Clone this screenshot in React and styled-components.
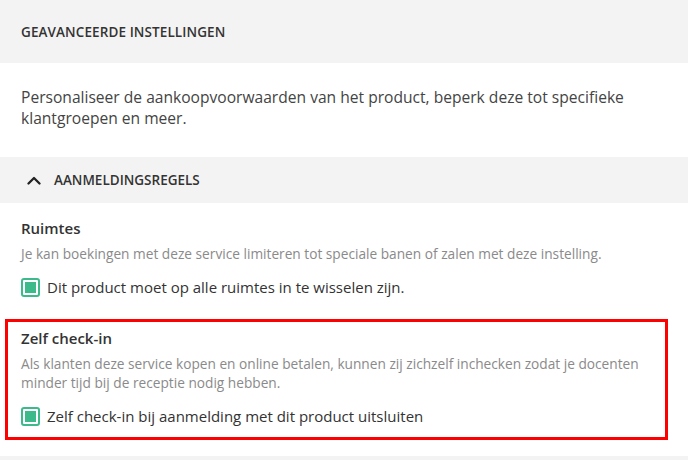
import React from "react";
import styled, { createGlobalStyle } from "styled-components";

const Global = createGlobalStyle`
  html, body { margin: 0; padding: 0; background: #fff; }
  body { font-family: "Open Sans", "Noto Sans", sans-serif; color: #333; }
`;

const Page = styled.div`
  width: 688px;
  height: 460px;
  overflow: hidden;
  display: flex;
  flex-direction: column;
`;

const PanelHeader = styled.div`
  height: 63px;
  background: #f3f3f3;
  display: flex;
  align-items: center;
  padding-left: 21px;
  font-size: 13.5px;
  font-weight: 600;
  letter-spacing: 0.1px;
  text-transform: uppercase;
  color: #333;
`;

const Intro = styled.p`
  margin: 0;
  height: 94px;
  box-sizing: border-box;
  padding: 24px 21px 0;
  font-size: 15.6px;
  line-height: 21px;
  color: #444;
`;

const SectionHeader = styled.div`
  height: 46px;
  background: #f3f3f3;
  display: flex;
  align-items: center;
  gap: 13px;
  padding-left: 27px;
  font-size: 13.5px;
  font-weight: 600;
  color: #333;
  text-transform: uppercase;
`;

const Body = styled.div`
  display: flex;
  flex-direction: column;
  padding: 14px 0 0;
`;

const Setting = styled.div`
  display: flex;
  flex-direction: column;
  padding: ${(p) => (p.$highlight ? "5px 13px 10px" : "0 21px 21px")};
  margin: ${(p) => (p.$highlight ? "0 20px 0 5px" : "0")};
  border: ${(p) => (p.$highlight ? "3px solid #f00" : "none")};
`;

const Title = styled.div`
  font-size: 15px;
  font-weight: 600;
  line-height: 22px;
  color: #333;
`;

const Desc = styled.div`
  margin-top: 5px;
  font-size: 13.7px;
  line-height: 19px;
  color: #8a8a8a;
`;

const CheckRow = styled.label`
  margin-top: 13px;
  display: flex;
  align-items: center;
  gap: 7px;
  font-size: 15px;
  line-height: 22px;
  color: #333;
`;

const Box = styled.span`
  width: 19px;
  height: 19px;
  box-sizing: border-box;
  border: 2px solid #3cba8b;
  border-radius: 3px;
  display: flex;
  align-items: center;
  justify-content: center;
  flex: none;
  &::after {
    content: "";
    width: 11px;
    height: 11px;
    background: #3cba8b;
  }
`;

const Footer = styled.div`
  margin-top: auto;
  height: 4px;
  background: #f3f3f3;
`;

const Chevron = () => (
  <svg width="14" height="9" viewBox="0 0 14 9" fill="none">
    <path d="M1.5 7.5L7 2L12.5 7.5" stroke="#222" strokeWidth="2.3" strokeLinecap="round" strokeLinejoin="round" />
  </svg>
);

export default function App() {
  return (
    <Page>
      <Global />
      <PanelHeader>Geavanceerde instellingen</PanelHeader>
      <Intro>
        Personaliseer de aankoopvoorwaarden van het product, beperk deze tot specifieke klantgroepen en meer.
      </Intro>
      <SectionHeader>
        <Chevron />
        Aanmeldingsregels
      </SectionHeader>
      <Body>
        <Setting>
          <Title>Ruimtes</Title>
          <Desc>Je kan boekingen met deze service limiteren tot speciale banen of zalen met deze instelling.</Desc>
          <CheckRow>
            <Box />
            Dit product moet op alle ruimtes in te wisselen zijn.
          </CheckRow>
        </Setting>
        <Setting $highlight>
          <Title>Zelf check-in</Title>
          <Desc>
            Als klanten deze service kopen en online betalen, kunnen zij zichzelf inchecken zodat je docenten minder tijd bij de receptie nodig hebben.
          </Desc>
          <CheckRow>
            <Box />
            Zelf check-in bij aanmelding met dit product uitsluiten
          </CheckRow>
        </Setting>
      </Body>
      <Footer />
    </Page>
  );
}
